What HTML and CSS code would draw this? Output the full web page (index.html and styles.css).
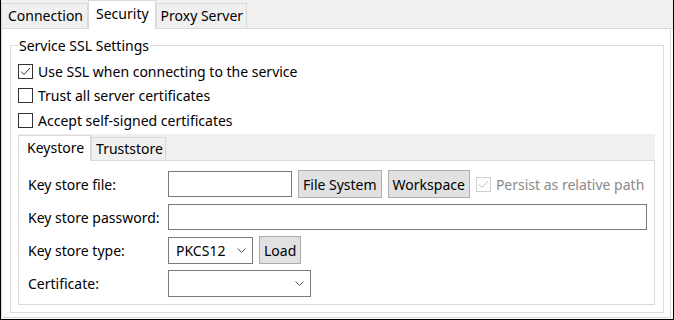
FILE: index.html
```html
<!DOCTYPE html>
<html lang="en">
<head>
  <meta charset="UTF-8">
  <title>Service Settings</title>
  <link rel="stylesheet" href="styles.css">
</head>
<body>
  <div class="window">
    <!-- top tab folder -->
    <div class="tabs">
      <div class="tab">Connection</div>
      <div class="tab active">Security</div>
      <div class="tab">Proxy Server</div>
    </div>

    <div class="pane">
      <fieldset class="group">
        <legend>Service SSL Settings</legend>

        <label class="check">
          <span class="box">
            <svg width="13" height="13" viewBox="0 0 13 13"><polyline points="2,6.5 5,9.5 11,3" fill="none" stroke="#333" stroke-width="1"/></svg>
          </span>
          Use SSL when connecting to the service
        </label>
        <label class="check">
          <span class="box"></span>
          Trust all server certificates
        </label>
        <label class="check">
          <span class="box"></span>
          Accept self-signed certificates
        </label>

        <!-- keystore / truststore tab folder -->
        <div class="subtabs">
          <div class="subtab active">Keystore</div>
          <div class="subtab">Truststore</div>
        </div>
        <div class="subpane">
          <div class="form">
            <span class="label">Key store file:</span>
            <div class="controls">
              <input type="text" class="field file-field">
              <button class="btn">File System</button>
              <button class="btn">Workspace</button>
              <label class="check disabled">
                <span class="box">
                  <svg width="13" height="13" viewBox="0 0 13 13"><polyline points="2,6.5 5,9.5 11,3" fill="none" stroke="#c2c2c2" stroke-width="1"/></svg>
                </span>
                Persist as relative path
              </label>
            </div>

            <span class="label">Key store password:</span>
            <div class="controls">
              <input type="password" class="field password-field">
            </div>

            <span class="label">Key store type:</span>
            <div class="controls">
              <div class="combo type-combo">
                <span>PKCS12</span>
                <svg width="9" height="5" viewBox="0 0 9 5"><polyline points="0.5,0.5 4.5,4.5 8.5,0.5" fill="none" stroke="#555" stroke-width="1"/></svg>
              </div>
              <button class="btn">Load</button>
            </div>

            <span class="label">Certificate:</span>
            <div class="controls">
              <div class="combo cert-combo">
                <span></span>
                <svg width="9" height="5" viewBox="0 0 9 5"><polyline points="0.5,0.5 4.5,4.5 8.5,0.5" fill="none" stroke="#555" stroke-width="1"/></svg>
              </div>
            </div>
          </div>
        </div>
      </fieldset>
    </div>
  </div>
</body>
</html>
```

FILE: styles.css
```css
* {
  box-sizing: border-box;
}

body {
  margin: 0;
  font-family: "Noto Sans", "Segoe UI", sans-serif;
  font-size: 14px;
  color: #000;
}

.window {
  width: 674px;
  height: 320px;
  border: 1px solid #000;
  border-top: none;
  background: #fff;
  display: flex;
  flex-direction: column;
}

/* top tabs */
.tabs {
  display: flex;
  align-items: flex-end;
  height: 29px;
  flex-shrink: 0;
  background: #f0f0f0;
  border-bottom: 1px solid #d9d9d9;
}

.tab {
  height: 25px;
  padding: 0 4px 0 6px;
  line-height: 24px;
  border: 1px solid #d9d9d9;
  border-bottom: none;
  background: #f0f0f0;
  white-space: nowrap;
}

.tab:last-child {
  padding: 0 3px 0 4px;
}

.tab.active {
  height: 29px;
  margin-bottom: -1px;
  padding: 0 6px 0 7px;
  line-height: 25px;
  background: #fff;
  position: relative;
}

.pane {
  flex: 1;
  margin: 0 2px 1px 0;
  border: 1px solid #d9d9d9;
  border-top: none;
}

/* group box */
.group {
  margin: 7px 6px 0 8px;
  padding: 4px 8px 7px 7px;
  border: 1px solid #dcdcdc;
  min-width: 0;
}

.group legend {
  padding: 0 1px;
  line-height: 19px;
}

.check {
  display: flex;
  align-items: center;
  height: 24px;
  white-space: nowrap;
}

.check + .check {
  height: 25px;
}

.check .box {
  width: 15px;
  height: 15px;
  margin-right: 5px;
  border: 1px solid #333;
  background: #fff;
  display: flex;
  align-items: center;
  justify-content: center;
  flex-shrink: 0;
}

.check.disabled {
  color: #8a8a8a;
  height: auto;
}

.check.disabled .box {
  border-color: #cfcfcf;
}

/* inner tabs */
.subtabs {
  display: flex;
  align-items: flex-end;
  height: 26px;
  margin-top: 1px;
  background: #f0f0f0;
}

.subtab {
  height: 23px;
  padding: 0 2px 0 4px;
  line-height: 22px;
  border: 1px solid #d9d9d9;
  border-bottom: none;
  background: #f0f0f0;
}

.subtab.active {
  height: 26px;
  margin-bottom: -1px;
  padding: 0 6px 0 8px;
  line-height: 23px;
  background: #fff;
  position: relative;
}

.subpane {
  border: 1px solid #d9d9d9;
  padding: 9px 6px 7px 9px;
}

.form {
  display: grid;
  grid-template-columns: 140px 1fr;
  row-gap: 6px;
  align-items: center;
}

.controls {
  display: flex;
  align-items: center;
  gap: 6px;
}

.field {
  height: 26px;
  border: 1px solid #7a7a7a;
  background: #fff;
  font: inherit;
  padding: 0 4px;
}

.file-field {
  width: 124px;
}

.password-field {
  width: 479px;
}

.btn {
  height: 28px;
  padding: 0 4px;
  border: 1px solid #adadad;
  background: #e1e1e1;
  font: inherit;
  color: #000;
}

.combo {
  height: 27px;
  border: 1px solid #7a7a7a;
  background: #fff;
  display: flex;
  align-items: center;
  justify-content: space-between;
  padding: 0 6px 0 7px;
}

.type-combo {
  width: 85px;
}

.cert-combo {
  width: 143px;
}
```
